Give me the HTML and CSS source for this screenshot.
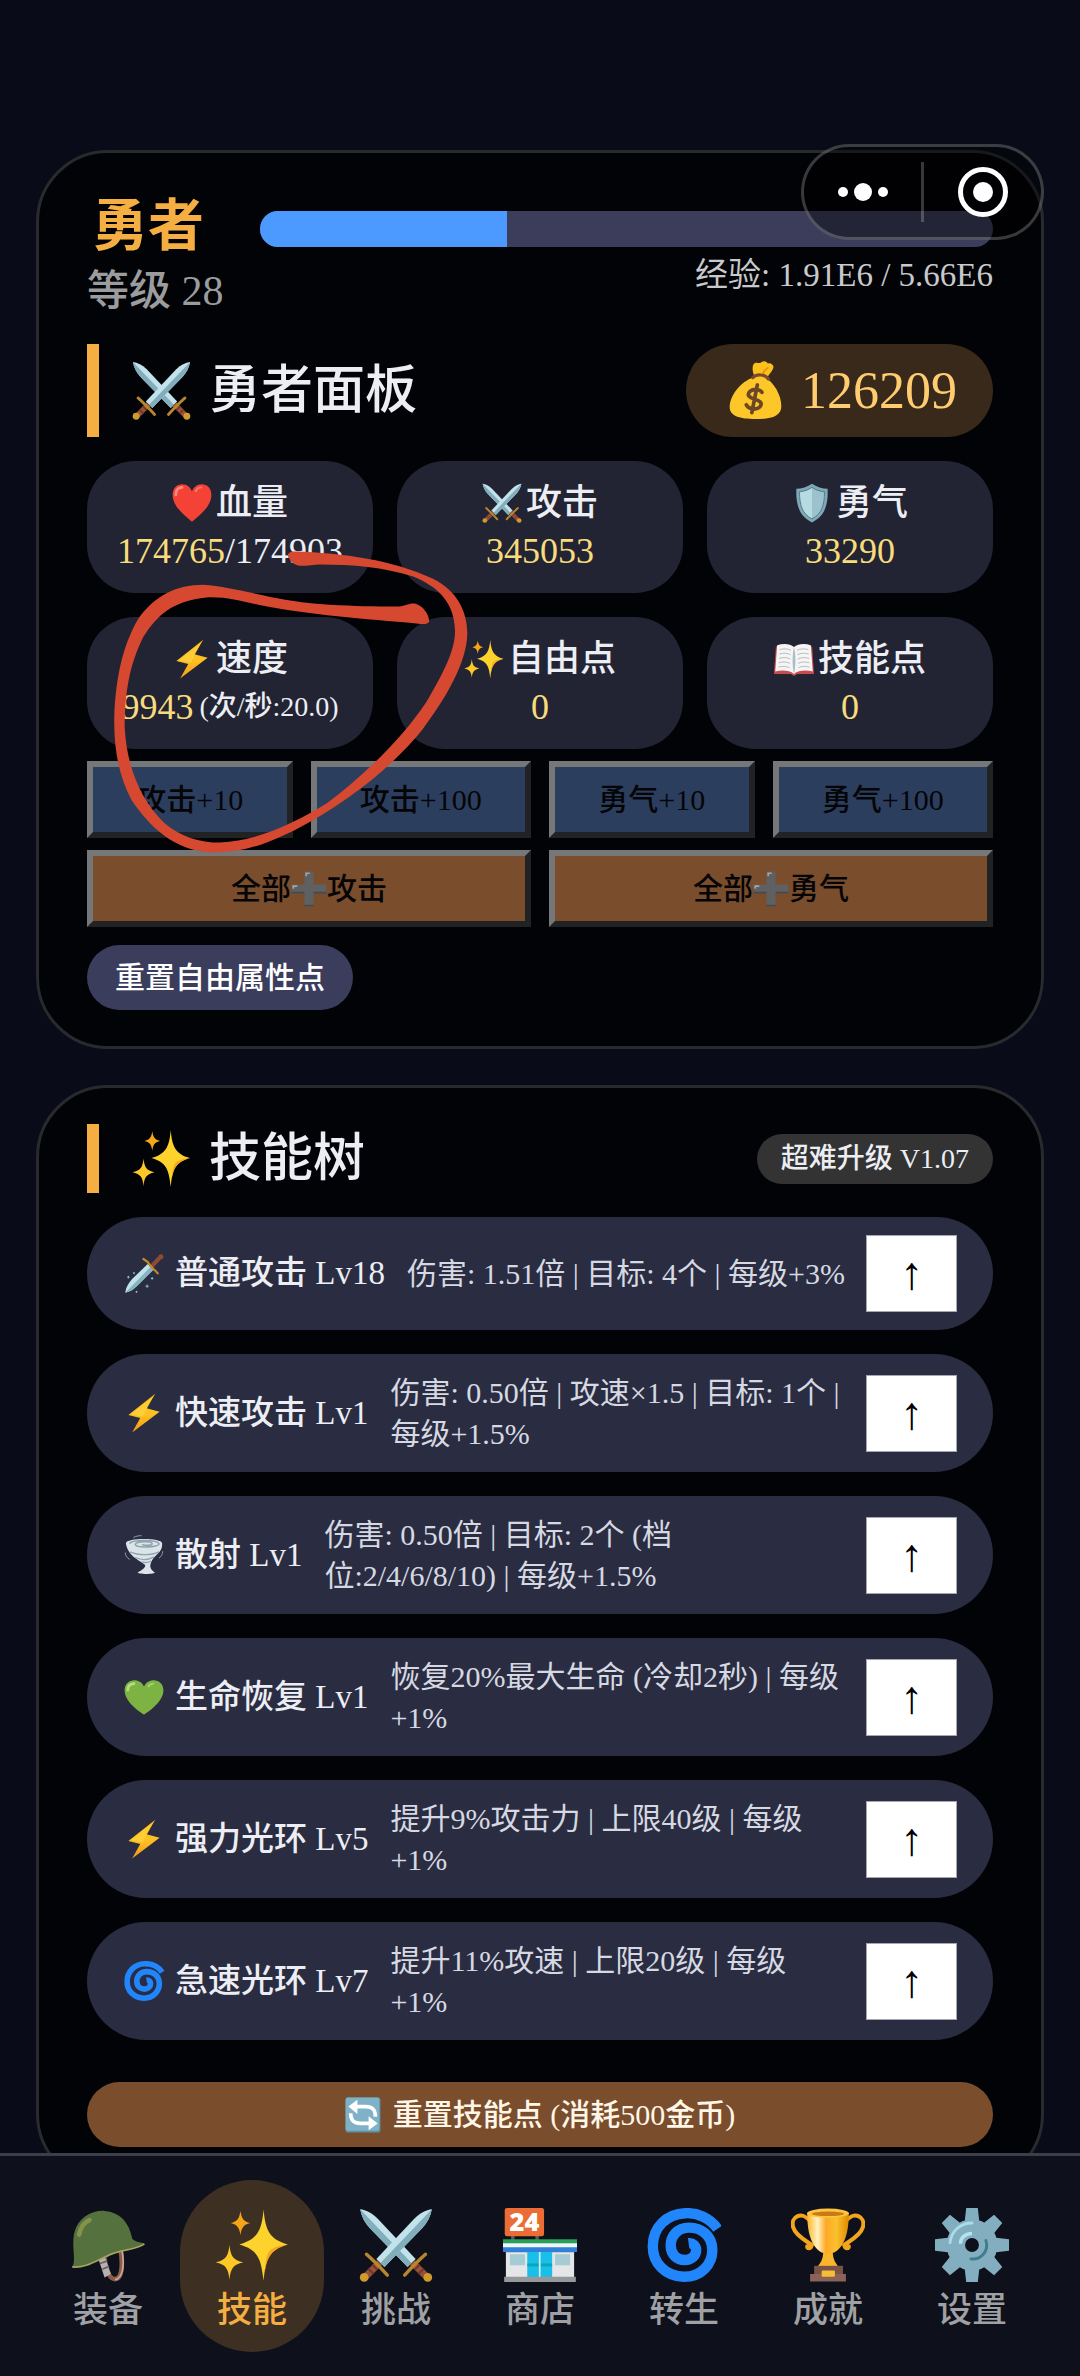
FILE: index.html
```html
<!DOCTYPE html>
<html lang="zh-CN">
<head>
  <meta charset="UTF-8" />
  <meta name="viewport" content="width=device-width, initial-scale=1.0" />
  <title>勇者面板</title>
  <link rel="stylesheet" href="styles.css">
</head>
<body>
  <!-- Icon set -->
  <svg class="sprite" aria-hidden="true">
    <defs>
      <linearGradient id="gold" x1="0" x2="0" y1="0" y2="1">
        <stop offset="0" stop-color="#feb804" />
        <stop offset="0.5" stop-color="#fdc322" />
        <stop offset="1" stop-color="#f79a16" />
      </linearGradient>
      <linearGradient id="cup" x1="0" x2="1" y1="0" y2="0">
        <stop offset="0" stop-color="#ffb52a" />
        <stop offset="0.25" stop-color="#fff3c0" />
        <stop offset="0.45" stop-color="#ffa726" />
        <stop offset="0.7" stop-color="#fbc02d" />
        <stop offset="1" stop-color="#e08a00" />
      </linearGradient>
      <g id="sword">
        <path d="M126 2C124 14 118 25 110 34L44 102 30 88 96 18C106 8 116 3 126 2Z" fill="#c3e3ec" />
        <path d="M126 2C124 14 118 25 110 34L44 102 37 95Z" fill="#82aebb" />
        <path d="M36 94L12 118" stroke="#95503a" stroke-width="12" />
        <path d="M23 98l9 9M16 105l9 9" stroke="#6d3426" stroke-width="3" />
        <path d="M13 80C22 88 38 104 49 116" stroke="#b8862b" stroke-width="6" stroke-linecap="round" fill="none" />
        <circle cx="9" cy="120" r="7.500" fill="#d19b2c" />
      </g>
    </defs>
    <symbol id="i-swords" viewBox="0 0 128 128">
      <use href="#sword" transform="translate(128 0) scale(-1 1)" />
      <use href="#sword" />
    </symbol>
    <symbol id="i-bag" viewBox="0 0 128 128">
      <path d="M62 34C56 22 56 6 64 4c5-1 8 2 12-1 6-5 13-2 15 3 4-3 12 2 12 7-1 8-10 16-15 25Z" fill="#fcc21b" />
      <path d="M78 34c2-9 7-16 14-20" stroke="#e59600" stroke-width="4" fill="none" />
      <path d="M60 36C32 44 8 76 8 100c0 20 22 26 56 26s56-6 56-28c0-24-16-52-36-62-8-5-18-4-24 0Z" fill="#fdc72a" />
      <path d="M58 36c8-8 26-8 34 3" stroke="#7a4a2c" stroke-width="7" fill="none" stroke-linecap="round" />
      <path d="M78 68c-4-7-18-9-26-2-8 8-1 14 10 17s18 8 12 16c-7 8-24 7-30-4M68 52L56 112" stroke="#6b4726" stroke-width="8" fill="none" stroke-linecap="round" />
    </symbol>
    <symbol id="i-heart" viewBox="0 0 128 128">
      <path d="M64 124C40 104 2 74 2 38 2 16 16 4 33 4c14 0 26 9 31 23C69 13 81 4 95 4c17 0 31 12 31 34 0 36-38 66-62 86Z" fill="#f44336" />
      <path d="M12 38c0-14 8-24 20-24" stroke="#ff8a80" stroke-width="9" stroke-linecap="round" fill="none" />
      <path d="M76 26c4-8 10-12 18-12" stroke="#ff7d72" stroke-width="6" stroke-linecap="round" fill="none" />
    </symbol>
    <symbol id="i-greenheart" viewBox="0 0 128 128">
      <path d="M64 120C40 104 2 76 2 42 2 22 16 10 33 10c14 0 26 8 31 20 5-12 17-20 31-20 17 0 31 12 31 32 0 34-38 62-62 78Z" fill="#7cb342" />
      <path d="M12 42c0-12 8-20 20-21" stroke="#b5dd80" stroke-width="9" stroke-linecap="round" fill="none" />
      <path d="M78 30c4-6 9-9 16-9" stroke="#a5d56a" stroke-width="6" stroke-linecap="round" fill="none" />
    </symbol>
    <symbol id="i-shield" viewBox="0 0 128 128">
      <path d="M64 2C50 12 30 18 14 18c-2 50 8 88 50 108 42-20 52-58 50-108C98 18 78 12 64 2Z" fill="#7fa9b6" />
      <path d="M64 14C52 22 38 27 24 28c0 42 8 70 40 87Z" fill="#b6dbe3" />
      <path d="M64 14c12 8 26 13 40 14 0 42-8 70-40 87Z" fill="#9cc3cd" />
      <path d="M64 14C52 22 38 27 24 28c0 42 8 70 40 87 32-17 40-45 40-87-14-1-28-6-40-14Z" fill="none" stroke="#4e7a86" stroke-width="3" />
    </symbol>
    <symbol id="i-bolt" viewBox="0 0 128 128">
      <path d="M100 2L14 70l38 10-26 46 88-66-42-11Z" fill="url(#gold)" />
      <path d="M94 10L24 67l36 9Z" fill="#ffd54a" opacity=".6" />
    </symbol>
    <symbol id="i-sparkles" viewBox="0 0 128 128">
      <path d="M84 2c3 36 10 52 42 61-32 9-38 24-42 63-4-39-10-54-42-63 32-9 39-25 42-61Z" fill="#fdd22d" />
      <path d="M84 126c4-39 10-54 42-63-18 2-28 6-33 13-6 10-6 26-9 50Z" fill="#f6a71b" />
      <path d="M25 64c2 19 6 26 24 30-18 4-22 11-24 30-2-19-6-26-24-30 18-4 22-11 24-30Z" fill="#fdc727" />
      <path d="M44 5c2 13 5 18 17 21-12 3-15 8-17 21-2-13-5-18-17-21 12-3 15-8 17-21Z" fill="#f4a617" />
    </symbol>
    <symbol id="i-book" viewBox="0 0 128 128">
      <path d="M6 24L0 112h54l10 6 10-6h54l-6-88Z" fill="#c94b4b" />
      <path d="M10 20C30 14 52 15 64 26c12-11 34-12 54-6l6 84c-22-5-46-4-60 8-14-12-38-13-60-8Z" fill="#f5f5f5" />
      <path d="M64 26c-6 24-6 60 0 86 6-26 6-62 0-86Z" fill="#a9bfc7" />
      <path d="M18 34c14-4 26-3 36 2M17 48c14-4 26-3 36 2M16 62c14-4 26-3 36 2M15 76c14-4 26-3 36 2M14 90c14-4 26-3 36 2M110 34c-14-4-26-3-36 2M111 48c-14-4-26-3-36 2M112 62c-14-4-26-3-36 2M113 76c-14-4-26-3-36 2M114 90c-14-4-26-3-36 2" stroke="#b5b8bb" stroke-width="3" fill="none" />
    </symbol>
    <symbol id="i-plus" viewBox="0 0 128 128">
      <path d="M48 2h32v46h46v32H80v46H48V80H2V48h46Z" fill="#5f6062" />
      <path d="M48 120h32v6H48zM80 74h46v6H80zM2 74h46v6H2z" fill="#47484a" />
      <path d="M54 16V8h10M8 60v-6h12" stroke="#a5a6a8" stroke-width="6" fill="none" stroke-linecap="round" />
    </symbol>
    <symbol id="i-dagger" viewBox="0 0 128 128">
      <path d="M4 124C6 106 14 94 26 80L76 32l18 18-50 50c-12 12-22 20-40 24Z" fill="#c3e3ec" />
      <path d="M4 124l81-83 9 9-50 50c-12 12-22 20-40 24Z" fill="#86b4c2" />
      <path d="M86 42l28-30" stroke="#8d4a35" stroke-width="13" />
      <path d="M62 16c10 6 14 8 20 18 8 12 16 16 26 28" stroke="#c08b2c" stroke-width="7" fill="none" stroke-linecap="round" />
      <circle cx="118" cy="9" r="8" fill="#8d4a35" />
      <path d="M14 70v8M10 74h8M32 58v6M29 61h6M74 98v10M69 103h10M90 74v8M86 78h8M40 118v6M37 121h6" stroke="#8ec9e2" stroke-width="3" />
    </symbol>
    <symbol id="i-tornado" viewBox="0 0 128 128">
      <path d="M6 26C8 8 120 8 122 26c2 24-14 32-22 42-10 10-14 18-16 30 0 8 4 14 14 22 6 6-58 6-54 0 14-8 24-14 24-24C58 84 12 70 6 26Z" fill="#dbe4e8" />
      <path d="M20 54c26 12 66 12 92 0M36 72c18 8 42 8 60-2M56 86c12 4 20 3 30-2" stroke="#90a4ae" stroke-width="4" fill="none" />
      <path d="M18 28c4-13 88-14 94 0 2 12-74 14-76 2 2-10 52-12 54-2 0 6-30 7-31 1" stroke="#90a4ae" stroke-width="5" fill="none" />
      <path d="M4 56c0 10 6 18 14 22M124 52c0 10-6 18-12 22M30 8c8-4 16-6 26-6" stroke="#90a4ae" stroke-width="3" fill="none" />
    </symbol>
    <symbol id="i-cyclone" viewBox="0 0 128 128">
      <path d="M122 36C108 16 86 8 66 9 34 10 10 34 10 66c0 30 22 52 54 53 30 0 49-22 49-46 0-26-20-39-40-39-21 0-32 15-32 31 0 16 11 25 24 25 12 0 20-8 20-17 0-8-6-13-13-12" stroke="#2186fb" stroke-width="18" fill="none" stroke-linejoin="round" />
    </symbol>
    <symbol id="i-refresh" viewBox="0 0 128 128">
      <rect x="2" y="2" width="124" height="124" rx="8" fill="#5c93a8" />
      <rect x="2" y="2" width="120" height="118" rx="8" fill="#7fb2c6" />
      <path d="M34 34h40c24 0 34 10 34 36M94 94H56c-24 0-36-10-36-36" stroke="#fff" stroke-width="13" fill="none" />
      <path d="M44 10L12 34l32 26ZM84 68l32 26-32 24Z" fill="#fff" />
    </symbol>
    <symbol id="i-helmet" viewBox="0 0 128 128">
      <path d="M58 86c2 16 6 36 18 37 12 0 14-22 10-50" stroke="#8a5c4a" stroke-width="8" fill="none" />
      <path d="M88 72c5 26 2 50-12 52" stroke="#c7a597" stroke-width="3" fill="none" />
      <path d="M48 90l11-4 10 28-11 6Z" fill="#b9b1b1" />
      <path d="M50 96l12-4M54 106l12-5" stroke="#6d6263" stroke-width="3" />
      <path d="M2 102C10 92 0 66 6 42 12 18 34 4 58 5c26 2 42 18 48 48 6 6 14 6 21 8-10 10-34 8-58 18-28 12-46 26-67 23Z" fill="#54713e" />
      <path d="M2 102c26 2 42-12 70-23 22-8 44-8 55-17" stroke="#a3a45e" stroke-width="3" fill="none" />
      <path d="M14 46c3-14 10-22 18-25" stroke="#85934a" stroke-width="8" fill="none" stroke-linecap="round" />
    </symbol>
    <symbol id="i-trophy" viewBox="0 0 128 128">
      <path d="M34 24C20 4-2 14 4 34c4 14 24 24 32 30-2 8-8 6-8 2M94 24c14-20 36-10 30 10-4 14-24 24-32 30 2 8 8 6 8 2" stroke="#f2a51d" stroke-width="7" fill="none" stroke-linecap="round" />
      <path d="M56 72h16c0 18 6 24 12 32H44c6-8 12-14 12-32Z" fill="#f9b52b" />
      <path d="M28 8h72c0 36-8 62-28 70-4 2-12 2-16 0C36 70 28 44 28 8Z" fill="url(#cup)" />
      <ellipse cx="64" cy="9" rx="36" ry="8" fill="#fcc440" />
      <ellipse cx="64" cy="10" rx="28" ry="4" fill="#c97a10" />
      <path d="M40 100h50v16H40z" fill="#7a5347" />
      <path d="M33 114h62v13H33z" fill="#8b6258" />
      <rect x="53" y="108" width="23" height="11" rx="2" fill="#f7bd37" />
    </symbol>
    <symbol id="i-gear" viewBox="0 0 128 128">
      <g fill="#82aec0">
        <path id="teeth" d="M54 0h20l3 26H51ZM54 128h20l3-26H51Z" />
        <use href="#teeth" transform="rotate(45 64 64)" />
        <use href="#teeth" transform="rotate(90 64 64)" />
        <use href="#teeth" transform="rotate(135 64 64)" />
      </g>
      <circle cx="64" cy="64" r="28" fill="none" stroke="#82aec0" stroke-width="32" />
      <path d="M26 60c2-20 18-34 38-34" stroke="#a9dbe8" stroke-width="5" fill="none" stroke-linecap="round" />
      <path d="M44 62c0-12 10-18 20-18" stroke="#b5e3ee" stroke-width="6" fill="none" />
      <path d="M88 56c6 18-8 34-26 32" stroke="#3f7d8c" stroke-width="5" fill="none" stroke-linecap="round" />
    </symbol>
  </svg>

  <div class="capsule">
    <button class="capsule-btn" aria-label="更多">
      <svg viewBox="0 0 54 54"><circle cx="7" cy="27" r="5" /><circle cx="27" cy="27" r="9" /><circle cx="47" cy="27" r="5" /></svg>
    </button>
    <button class="capsule-btn" aria-label="关闭">
      <svg viewBox="0 0 54 54"><circle cx="27" cy="27" r="22.500" class="ring" /><circle cx="27" cy="27" r="10" /></svg>
    </button>
  </div>

  <main>
    <section class="card">
      <div class="player">
        <div>
          <div class="player-name">勇者</div>
          <div class="player-level">等级 28</div>
        </div>
        <div class="player-exp">
          <div class="exp-bar"><div class="exp-fill" style="width: 33.7%"></div></div>
          <div class="exp-text">经验: 1.91E6 / 5.66E6</div>
        </div>
      </div>

      <div class="section-head">
        <h2><svg class="icon"><use href="#i-swords" /></svg>勇者面板</h2>
        <div class="coins"><svg class="icon"><use href="#i-bag" /></svg>126209</div>
      </div>

      <div class="stats">
        <div class="stat">
          <div class="stat-label"><svg class="icon"><use href="#i-heart" /></svg>血量</div>
          <div class="stat-value"><span class="value">174765</span>/174903</div>
        </div>
        <div class="stat">
          <div class="stat-label"><svg class="icon"><use href="#i-swords" /></svg>攻击</div>
          <div class="stat-value value">345053</div>
        </div>
        <div class="stat">
          <div class="stat-label"><svg class="icon"><use href="#i-shield" /></svg>勇气</div>
          <div class="stat-value value">33290</div>
        </div>
        <div class="stat">
          <div class="stat-label"><svg class="icon"><use href="#i-bolt" /></svg>速度</div>
          <div class="stat-value"><span class="value">9943</span><small>(次/秒:20.0)</small></div>
        </div>
        <div class="stat">
          <div class="stat-label"><svg class="icon"><use href="#i-sparkles" /></svg>自由点</div>
          <div class="stat-value value">0</div>
        </div>
        <div class="stat">
          <div class="stat-label"><svg class="icon"><use href="#i-book" /></svg>技能点</div>
          <div class="stat-value value">0</div>
        </div>
      </div>

      <div class="btn-row">
        <button class="btn">攻击+10</button>
        <button class="btn">攻击+100</button>
        <button class="btn">勇气+10</button>
        <button class="btn">勇气+100</button>
      </div>
      <div class="btn-row">
        <button class="btn btn-all">全部<svg class="icon"><use href="#i-plus" /></svg>攻击</button>
        <button class="btn btn-all">全部<svg class="icon"><use href="#i-plus" /></svg>勇气</button>
      </div>
      <button class="pill">重置自由属性点</button>

      <!-- Hand-drawn marker loop around the speed stat -->
      <svg class="marker" viewBox="150 20 1090 930" aria-hidden="true">
        <path d="M705 33C850 38 1000 58 1120 115C1190 150 1223 210 1223 280C1220 370 1160 470 1090 565C1010 665 880 780 700 872C600 920 540 937 455 937C340 930 270 860 215 780C175 705 160 620 163 520C168 420 185 320 235 235C285 165 350 133 430 133C530 140 640 180 780 191C880 198 960 199 1020 198C1045 194 1050 187 1068 190C1092 198 1110 225 1108 245C1100 254 1090 251 1070 249C920 236 740 222 610 196C550 184 500 168 440 171C340 180 290 225 250 290C210 370 195 450 194 560C200 670 235 770 310 845C360 890 420 907 480 907C600 900 700 850 800 790C920 700 1030 590 1100 485C1150 400 1187 330 1186 270C1184 190 1140 140 1060 108C970 80 880 72 780 72C760 73 740 77 718 76C695 70 690 60 684 42C690 33 698 33 705 33Z" />
      </svg>
    </section>

    <section class="card">
      <div class="section-head">
        <h2><svg class="icon"><use href="#i-sparkles" /></svg>技能树</h2>
        <div class="badge">超难升级 V1.07</div>
      </div>

      <div class="skills">
        <div class="skill">
          <div class="skill-name"><svg class="icon"><use href="#i-dagger" /></svg>普通攻击 Lv18</div>
          <div class="skill-desc">伤害: 1.51倍 | 目标: 4个 | 每级+3%</div>
          <button class="upgrade">↑</button>
        </div>
        <div class="skill">
          <div class="skill-name"><svg class="icon"><use href="#i-bolt" /></svg>快速攻击 Lv1</div>
          <div class="skill-desc">伤害: 0.50倍 | 攻速×1.5 | 目标: 1个 |<br>每级+1.5%</div>
          <button class="upgrade">↑</button>
        </div>
        <div class="skill">
          <div class="skill-name"><svg class="icon"><use href="#i-tornado" /></svg>散射 Lv1</div>
          <div class="skill-desc">伤害: 0.50倍 | 目标: 2个 (档<br>位:2/4/6/8/10) | 每级+1.5%</div>
          <button class="upgrade">↑</button>
        </div>
        <div class="skill">
          <div class="skill-name"><svg class="icon"><use href="#i-greenheart" /></svg>生命恢复 Lv1</div>
          <div class="skill-desc">恢复20%最大生命 (冷却2秒) | 每级<br>+1%</div>
          <button class="upgrade">↑</button>
        </div>
        <div class="skill">
          <div class="skill-name"><svg class="icon"><use href="#i-bolt" /></svg>强力光环 Lv5</div>
          <div class="skill-desc">提升9%攻击力 | 上限40级 | 每级<br>+1%</div>
          <button class="upgrade">↑</button>
        </div>
        <div class="skill">
          <div class="skill-name"><svg class="icon"><use href="#i-cyclone" /></svg>急速光环 Lv7</div>
          <div class="skill-desc">提升11%攻速 | 上限20级 | 每级<br>+1%</div>
          <button class="upgrade">↑</button>
        </div>
      </div>

      <button class="pill pill-wide"><svg class="icon"><use href="#i-refresh" /></svg>重置技能点 (消耗500金币)</button>
    </section>
  </main>

  <nav class="tabs">
    <a href="#equip"><svg class="icon"><use href="#i-helmet" /></svg>装备</a>
    <a href="#skills" class="active"><svg class="icon"><use href="#i-sparkles" /></svg>技能</a>
    <a href="#battle"><svg class="icon"><use href="#i-swords" /></svg>挑战</a>
    <a href="#shop">
      <svg class="icon" viewBox="0 0 128 128">
        <path d="M14 44h6v12h-6zM56 44h6v12h-6z" fill="#5b5b5b" />
        <path d="M5 72h118v48H5z" fill="#e4e6e7" />
        <path d="M5 72h118v6H5z" fill="#bfc9ce" />
        <path d="M12 80h26v19H12zM90 80h26v19H90z" fill="#a5ccd4" />
        <path d="M42 74h43v46H42z" fill="#18bfe8" />
        <path d="M42 96h43v5H42z" fill="#0aa5b9" />
        <path d="M62 74h3v46h-3z" fill="#d8eef4" />
        <path d="M0 54h128v8H0z" fill="#26a056" />
        <path d="M0 61h128v8H0z" fill="#eef6f8" />
        <path d="M0 68h128v8H0z" fill="#2f7fdb" />
        <path d="M2 119h124v9H2z" fill="#96999b" />
        <rect x="3" y="0" width="68" height="49" rx="4" fill="#ec6c36" />
        <text x="37" y="40" class="store-sign">24</text>
      </svg>
      商店
    </a>
    <a href="#rebirth"><svg class="icon"><use href="#i-cyclone" /></svg>转生</a>
    <a href="#trophies"><svg class="icon"><use href="#i-trophy" /></svg>成就</a>
    <a href="#settings"><svg class="icon"><use href="#i-gear" /></svg>设置</a>
  </nav>
</body>
</html>
```

FILE: styles.css
```css
:root {
  --accent: #f5ae42;
  --brown: #7a4d2d;
  --line: #292a2e;
}

* {
  box-sizing: border-box;
}

body {
  margin: 0;
  padding: 150px 36px 180px;
  font-family: "Liberation Serif", "Noto Sans CJK SC", serif;
  font-size: 30px;
  background-color: #090c18;
  color: #eceef4;
}

button {
  font-family: inherit;
  font-size: 30px;
  cursor: pointer;
}

.sprite {
  position: absolute;
  width: 0;
  height: 0;
}

.store-sign {
  font-family: "Open Sans", sans-serif;
  font-size: 44px;
  font-weight: 800;
  text-anchor: middle;
  fill: #fff;
}

.icon {
  flex: none;
  width: 40px;
  height: 40px;
}

main {
  display: flex;
  flex-direction: column;
  gap: 36px;
}

.card {
  position: relative;
  padding: 36px 48px;
  border: 3px solid var(--line);
  border-radius: 72px;
  background-color: #020306;
}

/* Floating menu capsule */
.capsule {
  position: absolute;
  z-index: 2;
  top: 144px;
  right: 36px;
  width: 243px;
  height: 96px;
  display: flex;
  align-items: center;
  border: 3px solid rgba(255, 255, 255, 0.22);
  border-radius: 48px;
  background-color: rgba(0, 0, 0, 0.4);
}

.capsule-btn {
  flex: 1;
  height: 60px;
  padding: 0;
  border: 0;
  background: none;
}

.capsule-btn + .capsule-btn {
  border-left: 3px solid rgba(255, 255, 255, 0.22);
}

.capsule-btn svg {
  display: block;
  width: 54px;
  height: 54px;
  margin: 0 auto;
  fill: #fff;
}

.capsule-btn .ring {
  fill: none;
  stroke: #fff;
  stroke-width: 5;
}

/* Player header */
.player {
  display: flex;
  align-items: center;
  gap: 36px;
  margin-bottom: 24px;
}

.player-name {
  padding-left: 5px;
  font-size: 56px;
  line-height: 74px;
  font-weight: 700;
  color: var(--accent);
}

.player-level {
  font-size: 42px;
  line-height: 57px;
  font-weight: 500;
  color: #9c9c9e;
}

.player-exp {
  flex: 1;
}

.exp-bar {
  height: 36px;
  margin-bottom: 6px;
  border-radius: 18px;
  overflow: hidden;
  background-color: #3b3d5a;
}

.exp-fill {
  height: 100%;
  background-color: #4c99ff;
}

.exp-text {
  font-size: 33px;
  line-height: 45px;
  text-align: right;
  color: #c8c9cc;
}

/* Section headings */
.section-head {
  display: flex;
  justify-content: space-between;
  align-items: center;
  margin-bottom: 24px;
  border-left: 12px solid var(--accent);
  padding-left: 33px;
}

h2 {
  display: flex;
  align-items: center;
  gap: 18px;
  margin: 0;
  font-size: 52px;
  line-height: 69px;
  font-weight: 500;
}

h2 .icon,
.coins .icon {
  width: 59px;
  height: 59px;
}

.coins {
  display: flex;
  align-items: center;
  gap: 16px;
  padding: 12px 36px 12px 40px;
  border-radius: 48px;
  font-size: 52px;
  line-height: 69px;
  background-color: #38291b;
  color: #ffcc70;
}

.badge {
  padding: 4px 24px;
  border-radius: 25px;
  font-size: 28px;
  line-height: 42px;
  font-weight: 500;
  background-color: #333;
}

/* Stats */
.stats {
  display: grid;
  grid-template-columns: repeat(3, 1fr);
  gap: 24px;
}

.stat {
  padding: 18px 24px;
  border-radius: 48px;
  font-size: 36px;
  line-height: 48px;
  font-weight: 500;
  white-space: nowrap;
  background-color: #222434;
}

.stat-label {
  display: flex;
  justify-content: center;
  align-items: center;
  gap: 4px;
  height: 48px;
}

.stat-value {
  display: flex;
  justify-content: center;
  align-items: center;
  height: 48px;
}

.value {
  color: #f8dc7c;
}

.stat small {
  margin-left: 6px;
  font-size: 28px;
}

.btn-row {
  display: flex;
  gap: 18px;
  margin-top: 12px;
}

.btn {
  flex: 1 1 auto;
  display: flex;
  justify-content: center;
  align-items: center;
  padding: 12px;
  border: 6px solid;
  border-color: #767778 #212223 #212223 #767778;
  line-height: 41px;
  font-weight: 500;
  background-color: #2c3e5e;
  color: #050507;
}

.btn-all {
  flex: 1 1 0;
  background-color: var(--brown);
}

.btn .icon {
  width: 36px;
  height: 36px;
}

.pill {
  display: flex;
  justify-content: center;
  align-items: center;
  gap: 12px;
  margin-top: 18px;
  padding: 12px 28px;
  border: 0;
  border-radius: 33px;
  line-height: 41px;
  font-weight: 500;
  background-color: #3b3d5d;
  color: #fff;
}

.pill-wide {
  width: 100%;
  margin-top: 42px;
  background-color: var(--brown);
  color: #fff6e8;
}

.pill-wide .icon {
  width: 36px;
  height: 36px;
}

.marker {
  position: absolute;
  left: 71px;
  top: 394px;
  width: 363px;
  height: 310px;
  fill: #d64830;
  pointer-events: none;
}

/* Skill list */
.skills {
  display: flex;
  flex-direction: column;
  gap: 24px;
}

.skill {
  display: flex;
  align-items: center;
  gap: 18px;
  padding: 18px 36px;
  border-radius: 60px;
  background-color: #2a2d41;
}

.skill-name {
  display: flex;
  align-items: center;
  gap: 10px;
  margin-right: 4px;
  font-size: 33px;
  line-height: 41px;
  font-weight: 500;
  white-space: nowrap;
}

.skill-name .icon {
  width: 42px;
}

.skill-desc {
  flex: 1;
  line-height: 41px;
  color: #d6d8e2;
}

.upgrade {
  width: 91px;
  height: 77px;
  padding: 0;
  border: 1px solid #a5a7b0;
  font-size: 46px;
  background-color: #fff;
  color: #000;
}

/* Bottom tabs */
.tabs {
  position: fixed;
  z-index: 3;
  left: 0;
  right: 0;
  bottom: 0;
  display: flex;
  padding: 24px 36px;
  border-top: 3px solid #3c3f4b;
  background-color: #0e111c;
}

.tabs a {
  flex: 1;
  display: flex;
  flex-direction: column;
  align-items: center;
  gap: 8px;
  padding: 28px 0 20px;
  border-radius: 72px;
  font-size: 35px;
  line-height: 42px;
  font-weight: 500;
  text-decoration: none;
  color: #a0a1a5;
}

.tabs a.active {
  background-color: #3d3023;
  color: var(--accent);
}

.tabs .icon {
  width: 74px;
  height: 74px;
}
```
